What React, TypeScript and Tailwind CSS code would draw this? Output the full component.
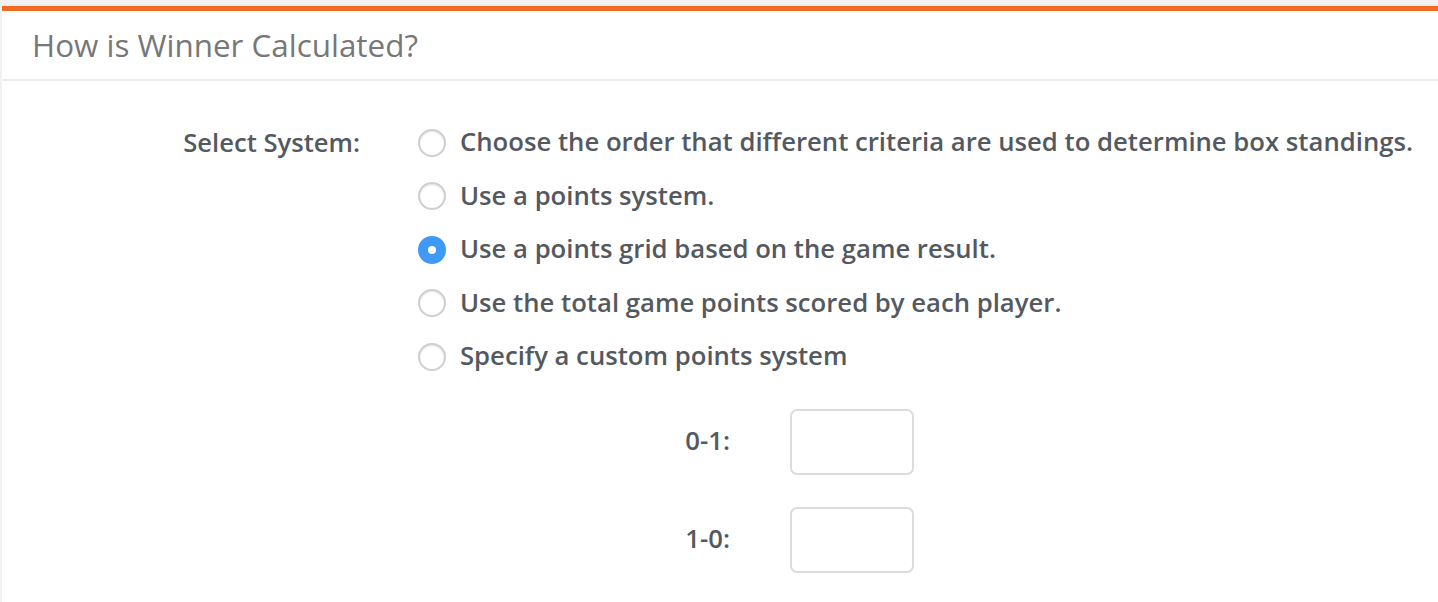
import { useState } from 'react';

const OPTIONS = [
  'Choose the order that different criteria are used to determine box standings.',
  'Use a points system.',
  'Use a points grid based on the game result.',
  'Use the total game points scored by each player.',
  'Specify a custom points system',
];

const GRID = ['0-1:', '1-0:'];

export default function App() {
  const [selected, setSelected] = useState(2);

  return (
    <div className="min-h-screen bg-[#f1f1f1] pt-[6px] font-['Open_Sans',sans-serif]">
      <div className="ml-[2px] bg-white border-t-[5px] border-[#f26a21] h-[596px] overflow-hidden">
        {/* Header */}
        <div className="h-[70px] flex items-center pl-[30px] border-b-[2px] border-[#ededed]">
          <h2 className="text-[31.4px] text-[#777] font-normal">How is Winner Calculated?</h2>
        </div>

        {/* Body */}
        <div className="pt-[35px] flex">
          <div className="w-[358px] shrink-0 flex justify-end h-[54px] items-center">
            <span className="text-[25.6px] font-semibold text-[#54595f]">Select System:</span>
          </div>
          <div className="ml-[58px]">
            {OPTIONS.map((opt, idx) => {
              const isActive = idx === selected;
              return (
                <label
                  key={opt}
                  onClick={() => setSelected(idx)}
                  className="flex items-center h-[53.5px] cursor-pointer"
                >
                  {isActive ? (
                    <span className="w-[28px] h-[28px] rounded-full bg-[#3e99f7] flex items-center justify-center shrink-0">
                      <span className="w-[8px] h-[8px] rounded-full bg-white" />
                    </span>
                  ) : (
                    <span className="w-[28px] h-[28px] rounded-full border-[2px] border-[#cfcfcf] shadow-[inset_0_1px_2px_rgba(0,0,0,0.12)] bg-white shrink-0" />
                  )}
                  <span className="ml-[14px] text-[25.7px] font-semibold text-[#54595f] whitespace-nowrap">
                    {opt}
                  </span>
                </label>
              );
            })}

            {/* Points grid */}
            <div className="mt-[25px] flex flex-col gap-[32px]">
              {GRID.map((g) => (
                <div key={g} className="flex items-center">
                  <span className="w-[312px] text-right text-[25.7px] font-semibold text-[#54595f]">{g}</span>
                  <input
                    type="text"
                    className="ml-[60px] w-[124px] h-[66px] rounded-[7px] border-[2px] border-[#dcdcdc] outline-none"
                  />
                </div>
              ))}
            </div>
          </div>
        </div>
      </div>
    </div>
  );
}
